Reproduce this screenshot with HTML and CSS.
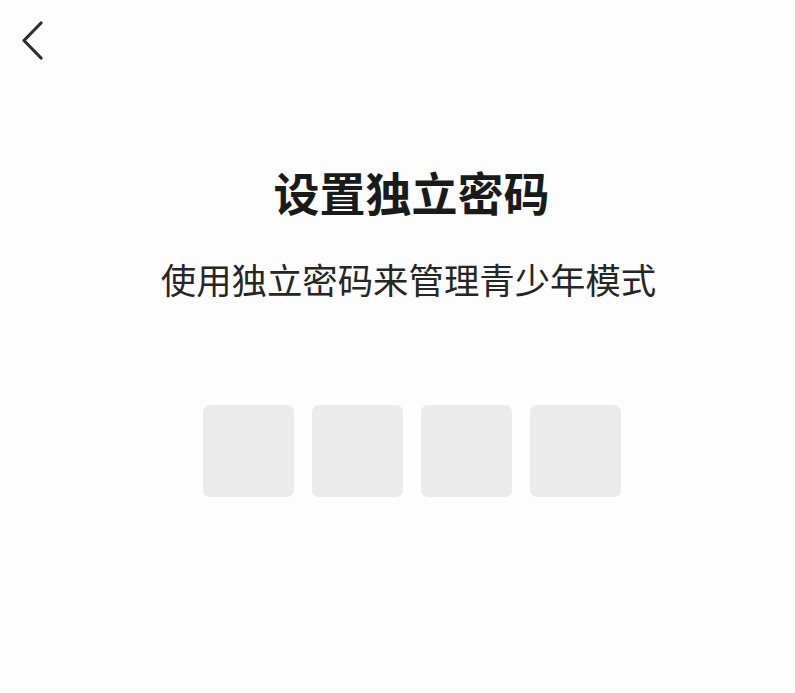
FILE: index.html
```html
<!DOCTYPE html>
<html lang="zh">
<head>
<meta charset="utf-8">
<link rel="stylesheet" href="styles.css">
</head>
<body>
<div class="page">
  <header class="topbar">
    <svg class="back" width="24" height="40" viewBox="0 0 24 40" aria-hidden="true">
      <path d="M21 3 L4 20.5 L21 38" fill="none" stroke="#2e2e2e" stroke-width="3.2" stroke-linecap="round" stroke-linejoin="round"/>
    </svg>
  </header>
  <main class="content">
    <h1 class="title">设置独立密码</h1>
    <p class="subtitle">使用独立密码来管理青少年模式</p>
    <div class="codes">
      <div class="cell"></div>
      <div class="cell"></div>
      <div class="cell"></div>
      <div class="cell"></div>
    </div>
  </main>
</div>
</body>
</html>
```

FILE: styles.css
```css
html, body {
  margin: 0;
  padding: 0;
  background: #fdfdfd;
}
body {
  font-family: "Noto Sans CJK SC", "Noto Sans", sans-serif;
  color: #1f1f1f;
}
.page {
  width: 795px;
  height: 693px;
  overflow: hidden;
}
.topbar {
  height: 70px;
  box-sizing: border-box;
  padding: 20px 0 0 20px;
}
.back {
  display: block;
}
.content {
  display: flex;
  flex-direction: column;
  align-items: center;
  padding-left: 28px;
}
.title {
  margin: 98px 0 0 0;
  font-size: 46px;
  line-height: 46px;
  font-weight: 700;
  color: #1a1a1a;
}
.subtitle {
  margin: 47px 6px 0 0;
  font-size: 35.4px;
  line-height: 35px;
  font-weight: 400;
  color: #262626;
}
.codes {
  margin-top: 109px;
  display: flex;
  gap: 18px;
}
.cell {
  width: 91px;
  height: 92px;
  border-radius: 7px;
  background: #ecebec;
}
```
